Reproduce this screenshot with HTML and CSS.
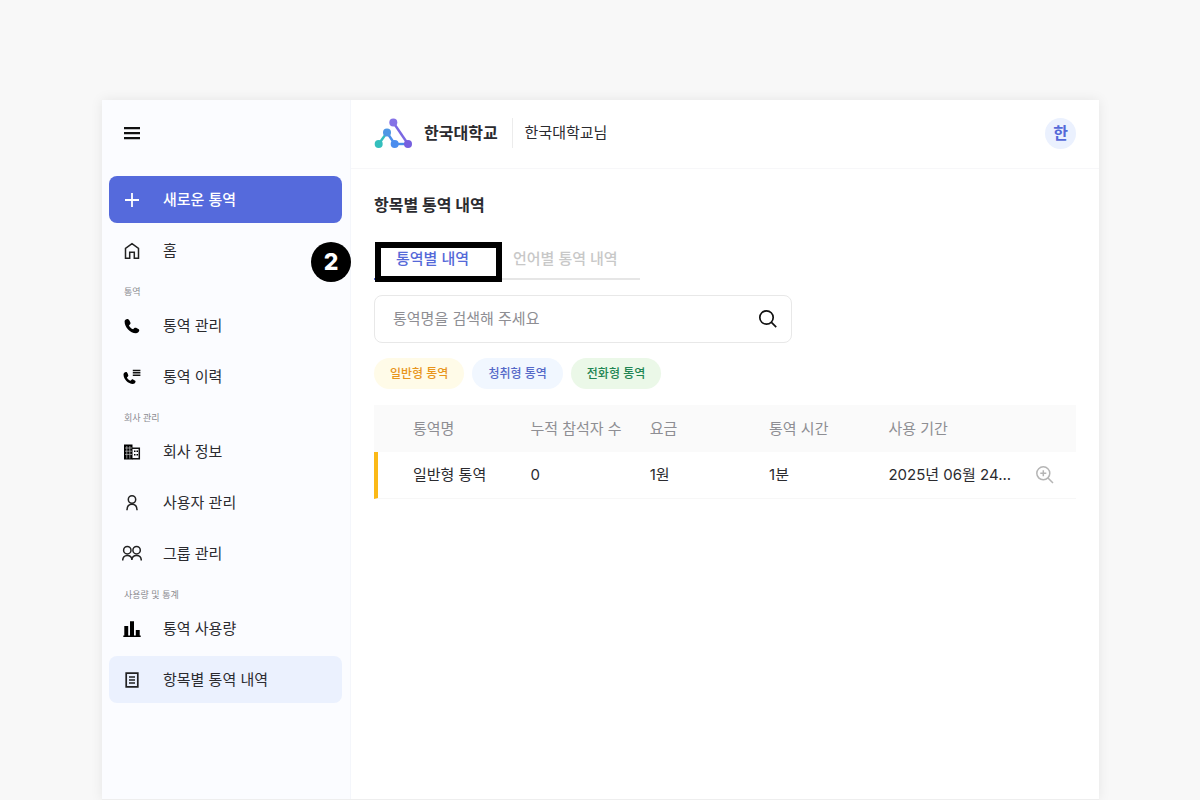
FILE: index.html
```html
<!DOCTYPE html>
<html lang="ko">
<head>
    <meta charset="UTF-8">
    <meta name="viewport" content="width=device-width, initial-scale=1.0">
    <title>항목별 통역 내역</title>
    <link rel="stylesheet" href="styles.css">
</head>
<body>
    <div class="app">
        <aside class="sidebar">
            <button class="menu-toggle" type="button" aria-label="메뉴">
                <svg width="16" height="14" viewBox="0 0 16 14" stroke="#111" stroke-width="2.200"><path d="M0 2.200h16M0 7.200h16M0 12.200h16"/></svg>
            </button>
            <nav class="nav">
                <a class="nav-item primary" href="#">
                    <svg class="icon" viewBox="0 0 20 20" fill="none" stroke="#fff" stroke-width="1.800"><path d="M10 3v14M3 10h14"/></svg>
                    새로운 통역
                </a>
                <a class="nav-item" href="#">
                    <svg class="icon" viewBox="0 0 20 20" fill="none" stroke="#222" stroke-width="1.500"><path d="M3.500 17.200V7.400L10 2.600l6.500 4.800v9.800h-4.200v-6H7.700v6z"/></svg>
                    홈
                </a>
                <p class="nav-label">통역</p>
                <a class="nav-item" href="#">
                    <svg class="icon" viewBox="0 0 20 20"><path d="M2.600 5.500C2.600 4 4.200 2.700 5.700 2.900c.8.100 1.200.7 1.600 1.400l1.100 2.200c.3.700.2 1.300-.3 1.800L6.900 9.400c1 1.900 2.300 3 4.200 3.900l1.200-1.200c.5-.5 1.200-.6 1.800-.3l2.200 1.200c.8.400 1.100 1 .9 1.800-.4 1.400-1.700 2.500-3.300 2.500C8.200 17.300 2.600 11.300 2.600 5.500z"/></svg>
                    통역 관리
                </a>
                <a class="nav-item" href="#">
                    <svg class="icon" viewBox="0 0 20 20"><path d="M1.500 7.600c0-1.500 1.300-2.600 2.500-2.600.7 0 1.100.5 1.400 1.100l.8 1.800c.3.600.1 1.100-.3 1.500l-1 1c.9 1.700 2 2.700 3.600 3.400l1.100-1.100c.4-.4 1-.5 1.500-.2l1.700.9c.7.400.9 1 .7 1.600-.4 1.200-1.400 2-2.700 2C6.200 17 1.500 12.400 1.500 7.600z"/><path d="M10.800 3.400h7.600M10.800 5.800h7.600M10.800 8.200h7.600" stroke="#111" stroke-width="1.500"/></svg>
                    통역 이력
                </a>
                <p class="nav-label">회사 관리</p>
                <a class="nav-item" href="#">
                    <svg class="icon" viewBox="0 0 20 20"><path d="M2 2.500h8.500v15H2z"/><path d="M10 6.200h7.300v10.500H10" fill="none" stroke="#111" stroke-width="1.500"/><path d="M3 6h7M3 9.200h7M3 12.400h7M4.800 4v12.500M7.800 4v12.500" stroke="#c8c8ca" stroke-width=".7"/><path d="M12 8.500h1.500v1.500H12zM14.500 8.500H16V10h-1.500zM12 12h1.500v1.500H12zM14.500 12H16v1.500h-1.500z"/></svg>
                    회사 정보
                </a>
                <a class="nav-item" href="#">
                    <svg class="icon" viewBox="0 0 20 20" fill="none" stroke="#222" stroke-width="1.500"><circle cx="10" cy="6.500" r="3.700"/><path d="M5 17.300c0-4 2-6 5-6s5 2 5 6"/></svg>
                    사용자 관리
                </a>
                <a class="nav-item" href="#">
                    <svg class="icon" viewBox="0 0 20 20" fill="none" stroke="#222" stroke-width="1.500"><circle cx="5.300" cy="6.200" r="3.700"/><circle cx="14.600" cy="6.200" r="3.700"/><path d="M.7 16.500c0-3.200 1.800-5.100 4.500-5.100s4.600 1.900 4.700 4.500c.1-2.600 2-4.500 4.700-4.500s4.700 1.900 4.700 5.100"/></svg>
                    그룹 관리
                </a>
                <p class="nav-label">사용량 및 통계</p>
                <a class="nav-item" href="#">
                    <svg class="icon" viewBox="0 0 20 20"><path d="M1.300 16.500h17.400V18H1.300zM2.300 7h3.900v10H2.300zM8 2.300h4V17H8zM13.800 11h3.900v6h-3.900z"/></svg>
                    통역 사용량
                </a>
                <a class="nav-item active" href="#">
                    <svg class="icon" viewBox="0 0 20 20" fill="none" stroke="#222" stroke-width="1.500"><path d="M4.200 3.200h11.600v13.600H4.200z" stroke-width="1.700"/><path d="M7 7h6M7 10h6M7 13h6"/></svg>
                    항목별 통역 내역
                </a>
            </nav>
        </aside>

        <div class="main">
            <header class="header">
                <svg class="logo" width="38" height="32" viewBox="0 0 38 32" fill="none" stroke-width="2.400">
                    <path d="M4.700 27L13 15.500" stroke="#35bdbd"/>
                    <path d="M13 15.500L20.700 27" stroke="#4b8fe9"/>
                    <path d="M20.700 27H34" stroke="#4b8fe9"/>
                    <path d="M19.300 5.500L34 27" stroke="#7b68e2"/>
                    <g stroke="none">
                        <circle cx="4.700" cy="27" r="4" fill="#34bfbd"/>
                        <circle cx="13" cy="15.500" r="4" fill="#4f97e5"/>
                        <circle cx="20.700" cy="27" r="4" fill="#4a8dee"/>
                        <circle cx="34" cy="27" r="4" fill="#7660df"/>
                        <circle cx="19.300" cy="5.500" r="4" fill="#8572e6"/>
                    </g>
                </svg>
                <strong class="brand">한국대학교</strong>
                <span class="user-name">한국대학교님</span>
                <button class="avatar" type="button">한</button>
            </header>

            <main class="content">
                <h1>항목별 통역 내역</h1>

                <div class="tabs">
                    <button class="tab selected" type="button">통역별 내역</button>
                    <button class="tab" type="button">언어별 통역 내역</button>
                    <span class="callout-box"></span>
                    <span class="callout-number">2</span>
                </div>

                <form class="search">
                    <input type="text" aria-label="통역명 검색" placeholder="통역명을 검색해 주세요">
                    <button type="button" aria-label="검색">
                        <svg width="20" height="20" viewBox="0 0 20 20" fill="none" stroke="#111" stroke-width="1.700"><circle cx="8.500" cy="8.500" r="6.700"/><path d="M13.200 13.200l5 5"/></svg>
                    </button>
                </form>

                <div class="chips">
                    <span class="chip normal">일반형 통역</span>
                    <span class="chip listen">청취형 통역</span>
                    <span class="chip phone">전화형 통역</span>
                </div>

                <table class="usage">
                    <thead>
                        <tr>
                            <th class="col-name">통역명</th>
                            <th class="col-data">누적 참석자 수</th>
                            <th class="col-data">요금</th>
                            <th class="col-data">통역 시간</th>
                            <th>사용 기간</th>
                            <th class="col-zoom"></th>
                        </tr>
                    </thead>
                    <tbody>
                        <tr>
                            <td class="col-name">일반형 통역</td>
                            <td>0</td>
                            <td>1원</td>
                            <td>1분</td>
                            <td>2025년 06월 24...</td>
                            <td class="col-zoom">
                                <button type="button" aria-label="자세히 보기">
                                    <svg width="20" height="20" viewBox="0 0 20 20" fill="none" stroke="#b5b5b5" stroke-width="1.500"><circle cx="8.300" cy="8.300" r="6.500"/><path d="M13 13l5 5M8.300 5.300v6M5.300 8.300h6"/></svg>
                                </button>
                            </td>
                        </tr>
                    </tbody>
                </table>
            </main>
        </div>
    </div>
</body>
</html>
```
FILE: styles.css
```css
* {
    box-sizing: border-box;
}
body {
    display: flex;
    min-height: 100vh;
    margin: 0;
    padding: 100px 101px 0 102px;
    background-color: #f8f8f8;
    color: #2b2b2f;
    font-family: Inter, "Noto Sans CJK KR", sans-serif;
    font-size: 15px;
    line-height: 24px;
}
button, input {
    padding: 0;
    border: none;
    background: none;
    color: inherit;
    font: inherit;
}
button {
    cursor: pointer;
}
svg {
    display: block;
}
.app {
    display: flex;
    flex: 1;
    background-color: #fff;
    border-bottom: 1px solid #eee;
    box-shadow: 0 0 12px rgba(0, 0, 0, 0.08);
}

/* Sidebar */
.sidebar {
    flex: none;
    width: 249px;
    padding: 0 8px 24px 7px;
    background-color: #fbfcff;
    border-right: 1px solid #f4f6fb;
}
.menu-toggle {
    display: block;
    margin: 26px 0 36px 15px;
}
.nav {
    display: flex;
    flex-direction: column;
    gap: 4px;
}
.nav-item {
    display: flex;
    align-items: center;
    gap: 21px;
    height: 47px;
    padding: 0 13px;
    border-radius: 8px;
    color: inherit;
    text-decoration: none;
}
.nav-item.primary {
    background-color: #556adc;
    color: #fff;
    font-weight: 500;
}
.nav-item.active {
    background-color: #ebf1fe;
}
.icon {
    width: 20px;
    height: 20px;
}
.nav-label {
    height: 20px;
    margin: 0;
    padding: 4px 15px 0;
    color: #8a8a8f;
    font-size: 9px;
    line-height: 20px;
}

/* Header */
.main {
    flex: 1;
    min-width: 0;
}
.header {
    display: flex;
    align-items: center;
    height: 69px;
    padding: 0 23px 2px;
    border-bottom: 1px solid #f7f7f9;
}
.brand {
    margin: 0 14px 0 12px;
    font-size: 16px;
    font-weight: 700;
}
.user-name {
    padding: 3px 12px;
    border-left: 1px solid #ececec;
}
.avatar {
    width: 31px;
    height: 31px;
    margin-left: auto;
    border-radius: 50%;
    background-color: #ebf1fe;
    color: #5569d8;
    font-size: 16px;
    font-weight: 700;
}

/* Content */
.content {
    padding: 24px 23px;
}
h1 {
    margin: 0;
    font-size: 16px;
    font-weight: 700;
    line-height: 24px;
}
.tabs {
    display: flex;
    position: relative;
    width: fit-content;
    margin-top: 21px;
}
.tab {
    height: 42px;
    padding: 2px 22px 0;
    border-bottom: 2px solid #e6e6e6;
    color: #c8c8c8;
    font-weight: 500;
}
.tab.selected {
    border-color: #5569d8;
    color: #5569d8;
}
/* guide marker drawn over the first tab */
.callout-box {
    position: absolute;
    top: 4px;
    left: 1px;
    width: 127px;
    height: 40px;
    border: 6px solid #000;
}
.callout-number {
    position: absolute;
    top: 4px;
    left: -63px;
    width: 40px;
    border-radius: 50%;
    background-color: #000;
    color: #fff;
    font-size: 23px;
    font-weight: 800;
    line-height: 40px;
    text-align: center;
}
.search {
    display: flex;
    align-items: center;
    max-width: 418px;
    height: 48px;
    margin-top: 15px;
    padding: 0 13px 0 18px;
    border: 1px solid #e8e8e8;
    border-radius: 8px;
}
.search input {
    flex: 1;
    min-width: 0;
    outline: none;
}
.search input::placeholder {
    color: #8e8e93;
    opacity: 1;
}
.chips {
    display: flex;
    gap: 8px;
    margin: 15px 0 16px;
}
.chip {
    padding: 0 16px;
    border-radius: 16px;
    font-size: 12px;
    font-weight: 500;
    line-height: 31px;
}
.chip.normal {
    background-color: #fffbe8;
    color: #e8951c;
}
.chip.listen {
    background-color: #f1f7ff;
    color: #5569c8;
}
.chip.phone {
    background-color: #ebf8e8;
    color: #1f8552;
}

/* Table */
.usage {
    width: 100%;
    border-collapse: separate;
    border-spacing: 0;
    table-layout: fixed;
}
.usage th, .usage td {
    height: 47px;
    padding: 0 16px;
    text-align: left;
    white-space: nowrap;
}
.usage th {
    background-color: #fafafa;
    color: #8e8e93;
    font-weight: 400;
}
.usage td {
    border-bottom: 1px solid #f7f7f7;
}
.usage .col-name {
    width: 20%;
    padding-left: 39px;
}
.usage td.col-name {
    padding-left: 35px;
    border-left: 4px solid #fbb917;
}
.usage .col-data {
    width: 17%;
}
.usage .col-zoom {
    width: 58px;
    padding: 0 17px;
}
.usage button {
    display: block;
}
```
